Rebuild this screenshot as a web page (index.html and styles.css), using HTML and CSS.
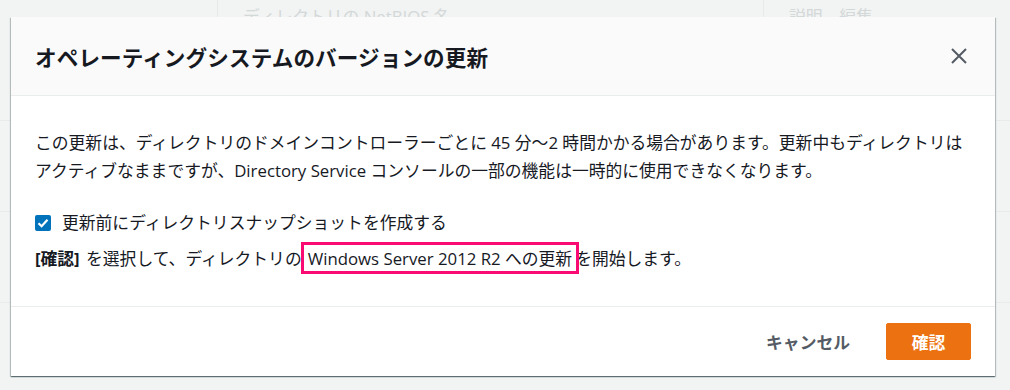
FILE: index.html
```html
<!DOCTYPE html>
<html lang="ja">
<head>
    <meta charset="UTF-8">
    <meta name="viewport" content="width=device-width, initial-scale=1.0">
    <title>オペレーティングシステムのバージョンの更新</title>
    <link rel="stylesheet" href="styles.css">
</head>
<body>
    <!-- page behind the dialog -->
    <div class="page">
        <div class="page-head">
            <div class="col col-a"></div>
            <div class="col col-b">ディレクトリの NetBIOS 名</div>
            <div class="col col-c">説明　編集</div>
        </div>
        <div class="page-row"></div>
        <div class="page-row"></div>
        <div class="page-row"></div>
    </div>

    <div class="modal">
        <div class="modal-header">
            <h2>オペレーティングシステムのバージョンの更新</h2>
            <button class="close-button" aria-label="閉じる">
                <svg width="16" height="16" viewBox="0 0 16 16">
                    <path d="M1 1 L15 15 M15 1 L1 15" stroke="#545b64" stroke-width="2" fill="none"/>
                </svg>
            </button>
        </div>

        <div class="modal-body">
            <p class="intro">この更新は、ディレクトリのドメインコントローラーごとに 45 分～2 時間かかる場合があります。更新中もディレクトリはアクティブなままですが、Directory Service コンソールの一部の機能は一時的に使用できなくなります。</p>

            <label class="check-row">
                <span class="checkbox">
                    <svg width="16" height="16" viewBox="0 0 16 16">
                        <path d="M3.5 8.2 L6.6 11.2 L12.5 4.8" stroke="#fff" stroke-width="2.2" fill="none"/>
                    </svg>
                </span>
                更新前にディレクトリスナップショットを作成する
            </label>

            <p class="confirm-line"><strong>[確認]</strong> を選択して、ディレクトリの<span class="highlight">Windows Server 2012 R2 への更新</span>を開始します。</p>
        </div>

        <div class="modal-footer">
            <button class="cancel-button">キャンセル</button>
            <button class="confirm-button">確認</button>
        </div>
    </div>
</body>
</html>
```

FILE: styles.css
```css
* {
    margin: 0;
    padding: 0;
    box-sizing: border-box;
}

body {
    font-family: "Open Sans", "Noto Sans CJK JP", sans-serif;
    font-size: 16.8px;
    color: #16191f;
    background-color: #f2f3f3;
    width: 1010px;
    height: 390px;
    overflow: hidden;
    position: relative;
}

/* background page */
.page {
    color: #d3d8d8;
}

.page-head {
    display: flex;
    height: 30px;
}

.col {
    padding: 6px 25px 0;
    line-height: 22px;
    white-space: nowrap;
}

.col-a {
    width: 217px;
}

.col-b {
    width: 546px;
    border-left: 1px solid #e6eaea;
}

.col-c {
    border-left: 1px solid #e6eaea;
}

.page-row {
    height: 91px;
    border-bottom: 1px solid #e9ebeb;
}

.page-row:first-of-type {
    height: 146px;
}

/* dialog */
.modal {
    position: absolute;
    left: 11px;
    top: 17px;
    width: 984px;
    height: 359px;
    background: #fff;
    display: flex;
    flex-direction: column;
    box-shadow: 0 1px 1px 0 rgba(0, 28, 36, 0.4), 1px 1px 1px 0 rgba(0, 28, 36, 0.2), -1px 1px 1px 0 rgba(0, 28, 36, 0.2);
}

.modal-header {
    height: 79px;
    background: #fafafa;
    border-bottom: 1px solid #eaeded;
    display: flex;
    align-items: center;
    justify-content: space-between;
    padding: 0 20px 0 24px;
}

.modal-header h2 {
    font-size: 21.6px;
    font-weight: 700;
    letter-spacing: 0.1px;
}

.close-button {
    background: none;
    border: none;
    width: 24px;
    height: 24px;
    display: flex;
    align-items: center;
    justify-content: center;
    margin-right: 4px;
}

.modal-body {
    flex: 1;
    padding: 33px 24px 0 24px;
    line-height: 28px;
}

.check-row {
    display: flex;
    align-items: center;
    gap: 11px;
    margin-top: 24px;
}

.checkbox {
    width: 16px;
    height: 16px;
    border-radius: 2px;
    background: #0073bb;
    display: flex;
}

.confirm-line {
    margin-top: 8px;
}

.confirm-line strong {
    font-weight: 700;
    margin-right: 2px;
}

.highlight {
    position: relative;
    margin: 0 3px 0 6px;
}

.highlight::after {
    content: "";
    position: absolute;
    left: -7px;
    right: -7px;
    top: -5px;
    bottom: -4px;
    border: 3px solid #fa0a73;
}

.modal-footer {
    height: 70px;
    border-top: 1px solid #eaeded;
    display: flex;
    align-items: center;
    justify-content: flex-end;
    padding: 0 24px 0 0;
}

.cancel-button {
    background: none;
    border: none;
    font-family: inherit;
    font-size: 16.8px;
    font-weight: 700;
    color: #545b64;
    padding: 0 20px;
    margin-right: 16px;
    height: 37px;
}

.confirm-button {
    background: #ec7211;
    border: 1px solid #ec7211;
    border-radius: 2px;
    color: #fff;
    font-family: inherit;
    font-size: 16.8px;
    font-weight: 700;
    width: 85px;
    height: 37px;
}
```
